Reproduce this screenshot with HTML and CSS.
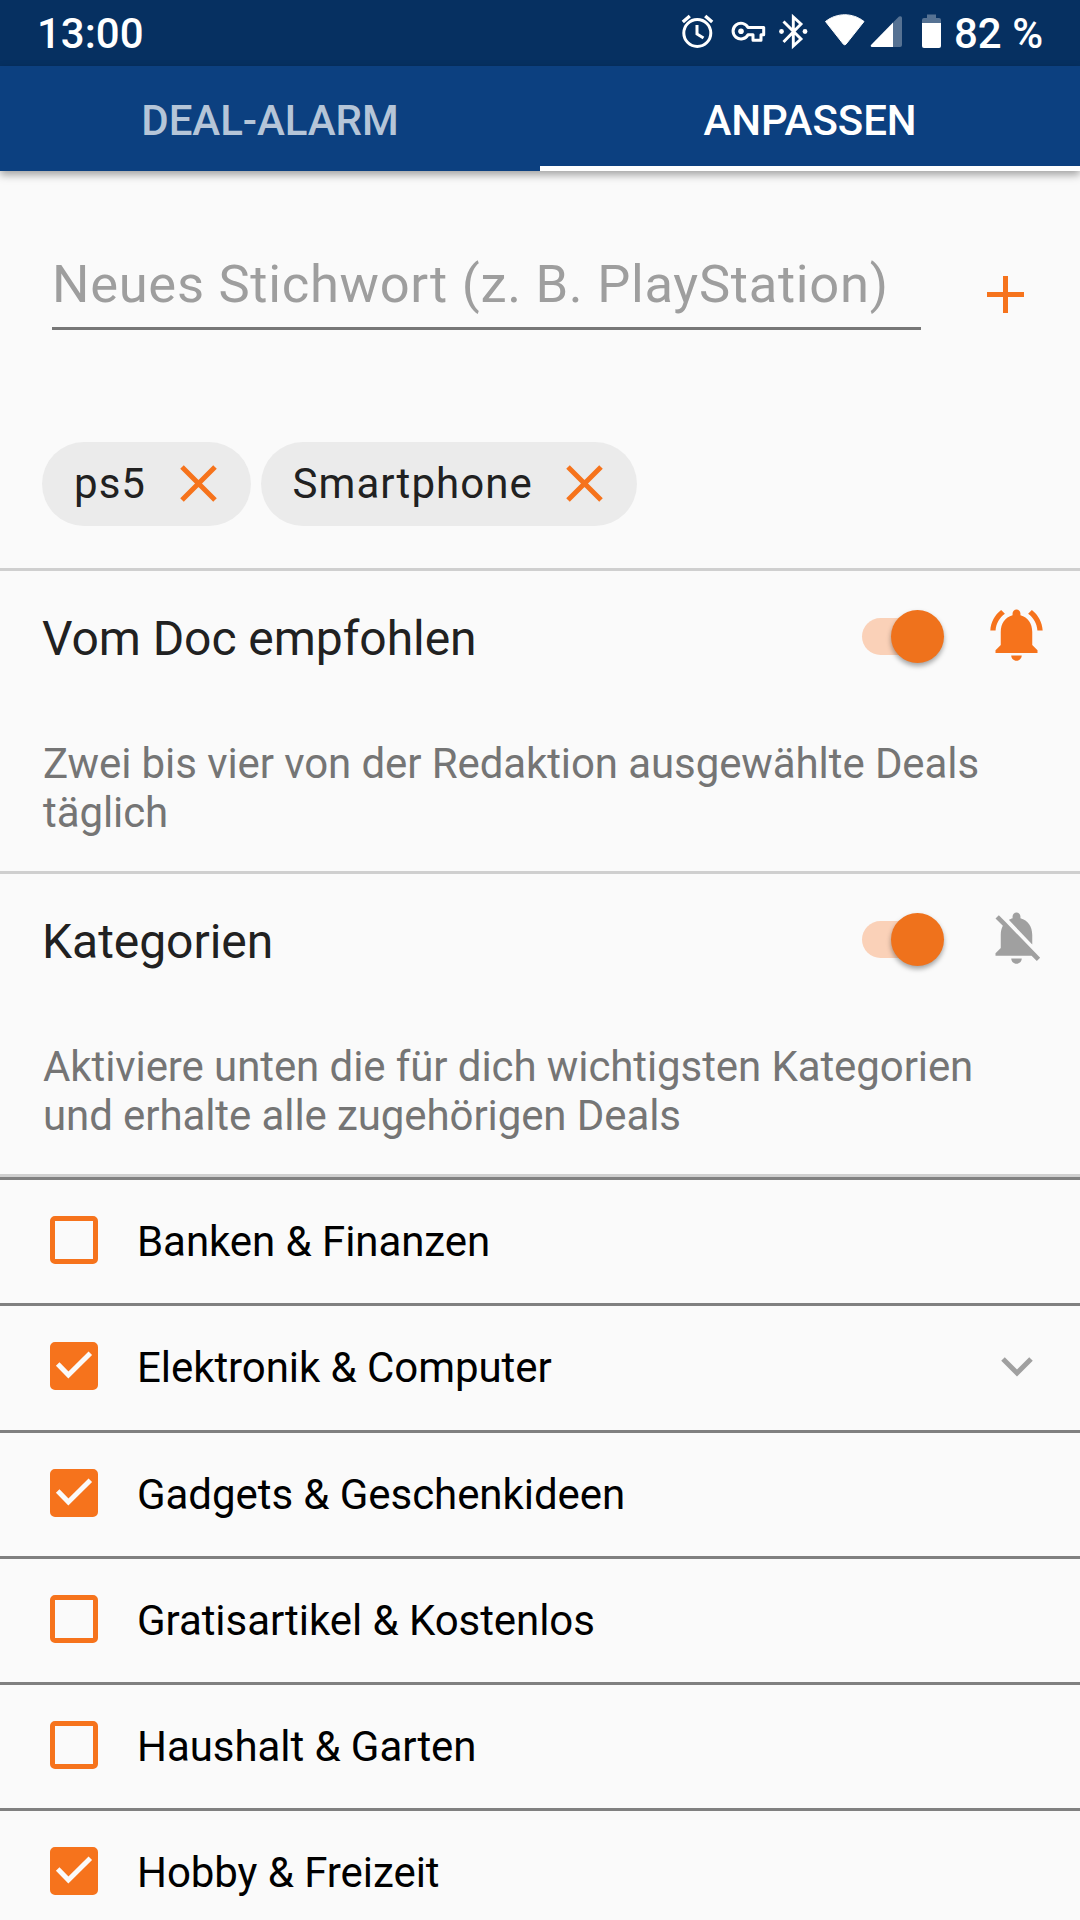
FILE: index.html
```html
<!DOCTYPE html>
<html lang="de">
<head>
<meta charset="utf-8">
<title>Deal-Alarm anpassen</title>
<link rel="stylesheet" href="styles.css">
</head>
<body>
<header class="statusbar">
  <span class="clock">13:00</span>
  <svg class="status-icons" viewBox="0 0 270 66" aria-hidden="true">
    <g fill="none" stroke="#fff" stroke-width="3">
      <circle cx="17.300" cy="33" r="13.500"/>
      <path d="M17 25v9l6.500 4"/>
      <path d="M2.800 22l7-6M32.200 22l-7-6" stroke-width="3.400"/>
      <path d="M68 27.500H83.700V34.700H81V40.300H73V34.700H68A7.900 7.900 0 1 1 68 27.500z" stroke-linejoin="round"/>
      <path d="M103.500 21.500L121 39l-7.700 7V17L121 24 103.500 42" stroke-width="2.900"/>
    </g>
    <g fill="#fff">
      <circle cx="61" cy="31.200" r="2.800"/>
      <circle cx="101.500" cy="31.500" r="2.400"/><circle cx="125" cy="31.500" r="2.400"/>
      <path d="M145.500 21.500c11.500-9 27-9 38.500 0L165.900 44.300q-1.200 1-2.400 0z" stroke="#fff" stroke-linejoin="round"/>
      <path d="M213 22.500V47h-21.500q-1.500-.8-.5-2z"/>
      <path d="M213 22.500l6-6q3-1 3 1.500v27q0 2-2 2h-7z" opacity=".32"/>
      <path d="M247 14.500h9v3.500h3q2 0 2 2v3h-19v-3q0-2 2-2h3z" opacity=".32"/>
      <path d="M242 23h19v23q0 2-2 2h-15q-2 0-2-2z"/>
    </g>
  </svg>
  <span class="battery">82 %</span>
</header>
<nav class="tabs">
  <a class="tab"><span>DEAL-ALARM</span></a>
  <a class="tab tab-active"><span>ANPASSEN</span></a>
</nav>
<main>
  <section class="keywords">
    <div class="entry">
      <div class="field"><span>Neues Stichwort (z. B. PlayStation)</span></div>
      <svg class="add" viewBox="0 0 37 37"><path d="M18.500 0v37M0 18.500h37"/></svg>
    </div>
    <div class="chips">
      <div class="chip"><span>ps5</span><svg viewBox="0 0 37 37"><path d="M2 2l33 33M35 2L2 35"/></svg></div>
      <div class="chip"><span>Smartphone</span><svg viewBox="0 0 37 37"><path d="M2 2l33 33M35 2L2 35"/></svg></div>
    </div>
  </section>
  <section class="setting">
    <div class="setting-head">
      <h2>Vom Doc empfohlen</h2>
      <div class="switch"></div>
      <svg class="bell bell-on" viewBox="0 0 24 24"><path d="M7.580 4.080L6.150 2.650C3.750 4.480 2.170 7.300 2.030 10.500h2c.15-2.650 1.510-4.970 3.550-6.420zm12.390 6.420h2c-.15-3.200-1.730-6.020-4.120-7.850l-1.420 1.430c2.020 1.450 3.390 3.770 3.540 6.420zM18 11c0-3.070-1.640-5.640-4.500-6.320V4c0-.83-.67-1.500-1.500-1.500s-1.500.67-1.500 1.500v.68C7.630 5.360 6 7.920 6 11v5l-2 2v1h16v-1l-2-2v-5zm-6 11c.14 0 .27-.01.4-.04.65-.14 1.180-.58 1.440-1.180.1-.24.15-.5.15-.78h-4c.01 1.100.9 2 2.010 2z"/></svg>
    </div>
    <p>Zwei bis vier von der Redaktion ausgewählte Deals<br>täglich</p>
  </section>
  <section class="setting">
    <div class="setting-head">
      <h2>Kategorien</h2>
      <div class="switch"></div>
      <svg class="bell" viewBox="0 0 24 24"><path d="M20 18.690L7.840 6.140 5.270 3.490 4 4.760l2.800 2.800v.01c-.52.99-.8 2.160-.8 3.420v5l-2 2v1h13.730l2 2L21 19.720l-1-1.030zM12 22c1.110 0 2-.89 2-2h-4c0 1.110.89 2 2 2zm6-7.320V11c0-3.080-1.640-5.640-4.500-6.320V4c0-.83-.67-1.500-1.500-1.500s-1.500.67-1.500 1.500v.68c-.15.03-.29.080-.42.120-.1.030-.2.070-.3.110h-.01c-.01 0-.01 0-.02.010-.23.090-.46.200-.68.310 0 0-.01 0-.01.010L18 14.680z"/></svg>
    </div>
    <p>Aktiviere unten die für dich wichtigsten Kategorien<br>und erhalte alle zugehörigen Deals</p>
  </section>
  <ul class="categories">
    <li><i class="box"></i><span>Banken &amp; Finanzen</span></li>
    <li class="expandable"><i class="box checked"><svg viewBox="0 0 48 48"><path d="M7.700 22l10.700 11L40.300 11.300"/></svg></i><span>Elektronik &amp; Computer</span><svg class="chevron" viewBox="0 0 32 20"><path d="M2 2l14 14L30 2"/></svg></li>
    <li><i class="box checked"><svg viewBox="0 0 48 48"><path d="M7.700 22l10.700 11L40.300 11.300"/></svg></i><span>Gadgets &amp; Geschenkideen</span></li>
    <li><i class="box"></i><span>Gratisartikel &amp; Kostenlos</span></li>
    <li><i class="box"></i><span>Haushalt &amp; Garten</span></li>
    <li><i class="box checked"><svg viewBox="0 0 48 48"><path d="M7.700 22l10.700 11L40.300 11.300"/></svg></i><span>Hobby &amp; Freizeit</span></li>
  </ul>
</main>
</body>
</html>
```

FILE: styles.css
```css
* { box-sizing: border-box; }
body {
  margin: 0;
  height: 1920px;
  overflow: hidden;
  background: #fafafa;
  color: #212121;
  font-family: Roboto, sans-serif;
  font-size: 42px;
}
svg { display: block; flex: none; }
.statusbar {
  display: flex;
  align-items: center;
  height: 66px;
  padding-left: 37px;
  background: #063061;
  color: #fff;
  font-weight: 500;
  white-space: nowrap;
}
.clock { flex: none; width: 643px; }
.status-icons { width: 270px; height: 66px; }
.battery { padding-left: 4px; }
.tabs {
  position: relative;
  display: flex;
  height: 105px;
  background: #0c4080;
  box-shadow: 0 4px 8px rgba(0, 0, 0, .35);
}
.tab {
  flex: 1;
  display: flex;
  justify-content: center;
  padding-top: 30px;
  line-height: 49px;
  font-weight: 500;
  letter-spacing: -.05px;
  color: #b5c5d8;
}
.tab-active { color: #fff; border-bottom: 5px solid #fff; }
.keywords {
  height: 400px;
  padding: 71px 42px 0;
  border-bottom: 3px solid #cfcfcf;
}
.entry { display: flex; height: 200px; padding-left: 10px; }
.field {
  width: 869px;
  height: 88px;
  border-bottom: 3px solid #777;
  color: #9e9e9e;
  font-size: 52.5px;
  line-height: 84px;
  letter-spacing: .71px;
  white-space: nowrap;
}
.add { width: 37px; height: 37px; margin: 34px 0 0 66px; }
.add path, .chip path { fill: none; stroke: #f6731c; stroke-width: 5; }
.chips { display: flex; gap: 10px; }
.chip {
  display: flex;
  align-items: center;
  justify-content: space-between;
  height: 84px;
  padding: 0 34px 1px 32px;
  border-radius: 42px;
  background: #ebebeb;
  letter-spacing: 1.05px;
  gap: 33.5px;
}
.chip svg { width: 37px; height: 37px; }
.setting {
  height: 303px;
  padding: 0 36px 0 43px;
  border-bottom: 3px solid #cfcfcf;
}
.setting-head { display: flex; align-items: center; height: 132px; }
.setting h2 {
  flex: 1;
  margin: 3px 0 0 -1px;
  font-size: 48px;
  font-weight: 400;
  letter-spacing: -.05px;
}
.switch {
  position: relative;
  width: 81px;
  height: 37px;
  margin: 0 42px 1px 0;
  border-radius: 19px;
  background: #fad1b8;
}
.switch::after {
  content: "";
  position: absolute;
  right: -1px;
  top: -8px;
  width: 53px;
  height: 53px;
  border-radius: 50%;
  background: #ef721c;
  box-shadow: 0 3px 5px rgba(0, 0, 0, .35);
}
.bell { width: 63px; height: 63px; margin: 0 -4px 5px 0; fill: #a0a0a0; }
.bell-on { fill: #f6731c; }
.setting p {
  margin: 36px 0 0;
  color: #757575;
  line-height: 49px;
  letter-spacing: -.09px;
  white-space: nowrap;
}
.categories { margin: 0; padding: 0; list-style: none; }
.categories li {
  display: flex;
  align-items: center;
  height: 126px;
  padding: 0 47.5px 0 50px;
  border-top: 3px solid #808080;
  color: #000;
  letter-spacing: -.06px;
}
.categories .expandable { height: 127px; padding-bottom: 1px; }
.categories span { flex: 1; }
.box {
  width: 48px;
  height: 48px;
  margin: 0 39px 3px 0;
  border: 5px solid #f6731c;
  border-radius: 5px;
}
.checked { background: #f6731c; }
.checked svg { width: 48px; height: 48px; margin: -5px; }
.checked path { fill: none; stroke: #fafafa; stroke-width: 5; }
.chevron { width: 32px; height: 20px; margin-bottom: 1px; }
.chevron path { fill: none; stroke: #a0a0a0; stroke-width: 5; }
```
